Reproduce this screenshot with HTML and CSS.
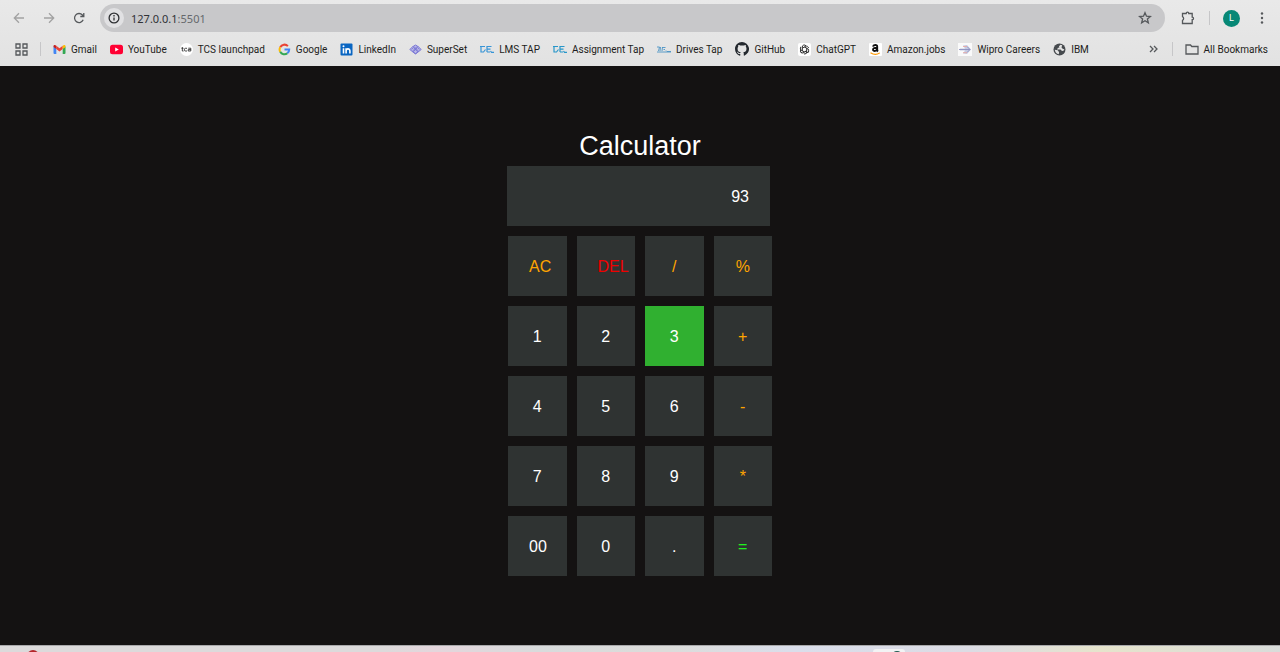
FILE: index.html
```html
<!DOCTYPE html>
<html lang="en">
<head>
<meta charset="utf-8">
<title>Calculator</title>
<link rel="stylesheet" href="styles.css">
</head>
<body>
<header class="browser">
  <div class="toolbar">
    <button class="nav muted" aria-label="Back"><svg width="14" height="14" viewBox="0 0 14 14" class="line"><path d="M12 7H2.5M7 2.3 2.3 7 7 11.7"/></svg></button>
    <button class="nav muted" aria-label="Forward"><svg width="14" height="14" viewBox="0 0 14 14" class="line"><path d="M2 7h9.500M7 2.300 11.700 7 7 11.700"/></svg></button>
    <button class="nav" aria-label="Reload"><svg width="14" height="14" viewBox="0 0 14 14" class="line"><path d="M11.200 8.800A4.500 4.500 0 1 1 10.400 4L11.600 5.300M11.800 2v3.500H8.300"/></svg></button>
    <div class="address">
      <button class="site-info" aria-label="Site information"><svg width="12" height="12" viewBox="0 0 12 12" class="line"><circle cx="6" cy="6" r="4.900"/><path d="M6 5.400v3.200M6 3.100v1.300"/></svg></button>
      <span class="url">127.0.0.1<span class="port">:5501</span></span>
      <button class="star" aria-label="Bookmark this tab"><svg width="14" height="14" viewBox="0 0 14 14" class="line"><path d="M7 1.700 8.500 5.200l3.900.3-3 2.500.95 3.800L7 9.800l-3.350 2L4.600 8l-3-2.500 3.900-.3z"/></svg></button>
    </div>
    <button class="extensions" aria-label="Extensions"><svg width="16" height="16" viewBox="0 0 16 16" class="line"><path d="M2.500 3.500h3.700a1.300 1.300 0 0 1 2.600 0h3.400v3.600a1.300 1.300 0 0 1 0 2.600v3.800H2.500v-3.200a2 2 0 0 0 0-3.600z"/></svg></button>
    <span class="divider"></span>
    <button class="avatar" aria-label="Profile">L</button>
    <button class="more" aria-label="Menu"><svg width="4" height="14" viewBox="0 0 4 14"><circle cx="2" cy="2.500" r="1.200"/><circle cx="2" cy="7" r="1.200"/><circle cx="2" cy="11.500" r="1.200"/></svg></button>
  </div>
  <nav class="bookmarks" aria-label="Bookmarks">
    <button class="apps" aria-label="Apps"><svg width="13" height="13" viewBox="0 0 13 13" class="line"><path d="M1 1h4v4H1zM8 1h4v4H8zM1 8h4v4H1zM8 8h4v4H8z"/></svg></button>
    <span class="divider"></span>
    <div class="links">
      <a href="#"><svg width="13" height="13" viewBox="0 0 13 13"><path fill="#4285f4" d="M.5 3.500 3.300 5.500V11H1.500a1 1 0 0 1-1-1z"/><path fill="#34a853" d="M12.500 3.500 9.700 5.500V11h1.800a1 1 0 0 0 1-1z"/><path fill="#ea4335" d="M3.300 2.800 6.500 5.200 9.700 2.800V6L6.500 8.400 3.300 6z"/><path fill="#c5221f" d="M.5 3.300C.5 2 2 1.600 3.300 2.800V6L.5 4z"/><path fill="#fbbc04" d="M12.500 3.300c0-1.300-1.500-1.700-2.800-.5V6l2.800-2z"/></svg>Gmail</a>
      <a href="#"><svg width="13" height="13" viewBox="0 0 13 13"><rect y="1.700" width="13" height="9.600" rx="2.500" fill="#ff0033"/><path fill="#fff" d="m5.200 4.400 3.600 2.100-3.600 2.100z"/></svg>YouTube</a>
      <a href="#"><svg width="13" height="13" viewBox="0 0 13 13"><circle cx="6.500" cy="6.500" r="6.500" fill="#fff"/><path class="thin" stroke="#333" d="M2.300 4v4h1.300M1.500 5.300h2M7 5.300H5.400q-1 0-1 1.400T5.500 8H7M8.300 5.200h2.500V8H8.200V6.600h2.600"/></svg>TCS launchpad</a>
      <a href="#"><svg width="13" height="13" viewBox="0 0 13 13" fill="none" stroke-width="2"><path stroke="#ea4335" d="M2.200 4.200A4.800 4.800 0 0 1 9.900 3.100"/><path stroke="#fbbc04" d="M2.200 4.200a4.800 4.800 0 0 0 0 4.600"/><path stroke="#34a853" d="M2.200 8.800a4.800 4.800 0 0 0 7.200 1.500"/><path stroke="#4285f4" d="M9.400 10.300a4.500 4.500 0 0 0 1.800-3.700H6.500"/></svg>Google</a>
      <a href="#"><svg width="13" height="13" viewBox="0 0 13 13"><rect x=".5" y=".5" width="12" height="12" rx="1" fill="#0a66c2"/><circle cx="3.500" cy="3.300" r="1" fill="#fff"/><path fill="none" stroke="#fff" stroke-width="1.600" d="M3.500 5.200v5.300M6.100 5.200v5.300M6.100 7.900c0-2.700 3.800-2.700 3.800 0v2.600"/></svg>LinkedIn</a>
      <a href="#"><svg width="13" height="13" viewBox="0 0 13 13"><path fill="#b9b8e6" d="M.8 6.500 4.300 3l2.200-1 2.200 1 3.500 3.500-3.400 3.300-2.300 1.200-2.300-1.200z"/><g class="thin" stroke="#7774d4"><path d="m.8 6.500 3.500-3.500 5 5-2.800 3zM12.200 6.500 8.700 3l-5 5 2.800 3z"/><path d="m2.400 6.500 2-2 4.200 4.200M10.600 6.500l-2-2-4.200 4.200M4.500 3l2-1 2 1"/></g></svg>SuperSet</a>
      <a href="#"><svg width="14" height="13" viewBox="0 0 14 13"><path fill="none" stroke="#3794d6" stroke-width="1.200" d="M0 3.500h5M1 3.500V9h2.500L5.500 6.500M7 3.500h4.500M7 3v6M7 6.200h3.500M7 9h3M10.500 8l1 1.300h2.500"/></svg>LMS TAP</a>
      <a href="#"><svg width="14" height="13" viewBox="0 0 14 13"><path fill="none" stroke="#2796c9" stroke-width="1.200" d="M0 3.500h5M1 3.500V9h2.500L5.500 6.500M7 3.500h4.500M7 3v6M7 6.200h3.500M7 9h3M10.500 8l1 1.300h2.500"/></svg>Assignment Tap</a>
      <a href="#"><svg width="14" height="13" viewBox="0 0 14 13"><path class="thin" stroke="#4b93c4" d="M0 4h2.500L1.500 8M3.500 4 3 8M5.500 4l-.5 4M5 4.500h3.500M6.500 6.500H8M0 9h14M9 7.500l1 1h4"/></svg>Drives Tap</a>
      <a href="#"><svg width="14" height="14" viewBox="0 0 16 16"><path fill="#24292f" d="M8 0C3.580 0 0 3.580 0 8c0 3.540 2.290 6.530 5.470 7.590.4.070.55-.17.55-.38v-1.490c-2.010.37-2.530-.49-2.690-.94-.09-.23-.48-.94-.82-1.130-.28-.15-.68-.52-.01-.53.63-.01 1.080.58 1.230.82.72 1.210 1.870.87 2.330.66.070-.52.280-.87.510-1.070-1.780-.2-3.640-.89-3.640-3.950 0-.87.310-1.590.82-2.150-.08-.2-.36-1.020.08-2.120 0 0 .67-.21 2.200.82a7.600 7.600 0 0 1 4 0c1.530-1.040 2.200-.82 2.200-.82.44 1.100.16 1.920.08 2.120.51.560.82 1.270.82 2.150 0 3.070-1.870 3.750-3.650 3.950.29.250.54.730.54 1.480v2.190c0 .21.150.46.550.38A8 8 0 0 0 8 0z"/></svg>GitHub</a>
      <a href="#"><svg width="13" height="13" viewBox="0 0 13 13"><rect width="13" height="13" rx="2" fill="#fff"/><g class="thin" stroke="#222"><path id="petal" d="M4.300 7.800V4a2 2 0 0 1 3.700-1.100M4.300 5.200l3.200-1.800a2 2 0 0 1 3 1.600"/><use href="#petal" transform="rotate(120 6.500 6.500)"/><use href="#petal" transform="rotate(240 6.500 6.500)"/></g></svg>ChatGPT</a>
      <a href="#"><svg width="13" height="13" viewBox="0 0 13 13"><rect width="13" height="13" rx="1" fill="#fff"/><path fill="none" stroke="#111" stroke-width="1.900" d="M4 3.700C4.300 1.500 8.200 1.300 8.200 3.500v3.300q0 1 .9 1.500M8.200 4.700C5.500 4.600 4 5.200 4 6.700 4 8.700 8.200 8.400 8.200 5.500"/><path fill="none" stroke="#f90" stroke-width="1.100" d="M1.500 9.700q4.800 3.200 9.300.2"/></svg>Amazon.jobs</a>
      <a href="#"><svg width="14" height="13" viewBox="0 0 14 13"><rect width="14" height="13" fill="#fafafa"/><path fill="#c5cbe2" d="M5 2.500 9 2l4 4.500-4 4.500-4-.5 2-3H2V5.500h5z"/><path class="thin" stroke="#8c8fc0" d="M1 6.500h11M9 3.500l3 3-3 3"/><path class="thin" stroke="#e8a9a6" d="M5 3.500h4M5 9.700h4"/></svg>Wipro Careers</a>
      <a href="#"><svg width="13" height="13" viewBox="0 0 13 13"><circle cx="6.500" cy="6.500" r="6" fill="#464a4e"/><path fill="#e2e2e2" d="M7.500 1.700 6 3.300l.3 1.500H5L4 6.500h3.500L9 8l1.500-.2.9-1.500L10 6 8.500 4.500 9.200 2.300zM1.800 6.800l3 .5 1.300 1.900-.3 2.100C3.500 11 1.900 9 1.800 6.800z"/></svg>IBM</a>
    </div>
    <button class="overflow" aria-label="More bookmarks"><svg width="9" height="8" viewBox="0 0 9 8" class="line"><path d="m1 1 3 3-3 3M5 1l3 3-3 3"/></svg></button>
    <span class="divider"></span>
    <a class="all" href="#"><svg width="14" height="13" viewBox="0 0 14 13" class="line"><path d="M1 2h4.500l1.300 1.500H13V11H1z"/></svg>All Bookmarks</a>
  </nav>
</header>
<main class="page">
  <section class="calculator">
    <h1 class="title">Calculator</h1>
    <input class="display" type="text" value="93" aria-label="Result" readonly>
    <div class="keys">
      <button class="key op">AC</button>
      <button class="key delete">DEL</button>
      <button class="key op">/</button>
      <button class="key op">%</button>
      <button class="key">1</button>
      <button class="key">2</button>
      <button class="key active">3</button>
      <button class="key op">+</button>
      <button class="key">4</button>
      <button class="key">5</button>
      <button class="key">6</button>
      <button class="key op">-</button>
      <button class="key">7</button>
      <button class="key">8</button>
      <button class="key">9</button>
      <button class="key op">*</button>
      <button class="key">00</button>
      <button class="key">0</button>
      <button class="key">.</button>
      <button class="key equals">=</button>
    </div>
  </section>
</main>
<footer class="taskbar">
  <svg class="badge" width="12" height="6" viewBox="0 0 12 6"><circle cx="6" cy="6" r="6" fill="#b3262b"/></svg>
  <span class="task"><svg width="8" height="3" viewBox="0 0 8 3"><path fill="#1f5a50" d="M0 3q1-2 4-2t4 2z"/></svg></span>
</footer>
</body>
</html>
```
FILE: styles.css
```css
* {
  box-sizing: border-box;
}

body {
  margin: 0;
  min-height: 100vh;
  display: flex;
  flex-direction: column;
  background: #141212;
  font-family: "Liberation Sans", Arial, sans-serif;
}

button {
  padding: 0;
  border: 0;
  background: none;
  font: inherit;
  color: inherit;
}

svg {
  display: block;
  flex: none;
}

.line {
  fill: none;
  stroke: currentColor;
  stroke-width: 1.3;
}

.thin {
  fill: none;
  stroke-width: 0.9;
}

.browser {
  background: linear-gradient(#e9e9e9, #e2e2e2);
  color: #55585b;
  font-family: Roboto, sans-serif;
  font-size: 10px;
}

.toolbar {
  display: flex;
  align-items: center;
  height: 36px;
  padding: 0 16px 0 12px;
}

.nav {
  width: 14px;
  margin-right: 16px;
}

.nav.muted {
  color: #a2a2a2;
}

.address {
  flex: 1;
  display: flex;
  align-items: center;
  gap: 7px;
  height: 28px;
  margin-left: -2px;
  padding: 0 13px 0 4px;
  border-radius: 14px;
  background: #c8c8ca;
}

.site-info {
  display: grid;
  place-items: center;
  width: 20px;
  height: 20px;
  border-radius: 50%;
  background: #e1e1e3;
  color: #2e3033;
}

.url {
  flex: 1;
  font-family: "Noto Sans", sans-serif;
  font-size: 11px;
  color: #303236;
}

.port {
  color: #66686c;
}

.extensions {
  margin-left: 15px;
}

.divider {
  width: 1px;
  height: 14px;
  background: #c6c6c8;
}

.toolbar .divider {
  margin: 0 13px 0 13px;
}

.avatar {
  width: 17px;
  height: 17px;
  border-radius: 50%;
  background: #078876;
  color: #fff;
  font-size: 9px;
}

.more {
  margin-left: 20px;
  fill: currentColor;
}

.bookmarks {
  display: flex;
  align-items: center;
  height: 30px;
  padding: 0 12px 4px 15px;
}

.bookmarks a {
  display: flex;
  align-items: center;
  gap: 5px;
  color: #1d1d20;
  text-decoration: none;
  white-space: nowrap;
}

.bookmarks .divider {
  margin: 0 12px;
}

.links {
  flex: 1;
  display: flex;
  gap: 13px;
}

.bookmarks .all svg {
  color: #55585b;
}

.overflow {
  margin-right: 2px;
}

.page {
  flex: 1;
  display: flex;
  justify-content: center;
  padding: 64px 0;
}

.calculator {
  display: flex;
  flex-direction: column;
  width: 266px;
}

.title {
  margin: 0 0 4px;
  color: #fff;
  font-size: 27px;
  font-weight: 400;
  line-height: 32px;
  text-align: center;
}

.display {
  height: 60px;
  margin: 0 3px 10px 0;
  padding: 2px 21px 0;
  border: 0;
  background: #2f3332;
  color: #fff;
  font: inherit;
  font-size: 16px;
  text-align: right;
}

.keys {
  display: grid;
  grid-template-columns: repeat(4, minmax(0, 1fr));
  grid-auto-rows: 60px;
  gap: 10px;
  padding: 0 1px;
}

.key {
  padding: 2px 21px 0;
  background: #2f3332;
  color: #fff;
  font-size: 16px;
}

.op {
  color: #ffa500;
}

.delete {
  color: #f00000;
}

.active {
  background: #30b030;
}

.equals {
  color: #20f020;
}

.taskbar {
  display: flex;
  height: 7px;
  overflow: hidden;
  border-top: 1px solid #a9a9ab;
  background: linear-gradient(90deg, #dcdadb 0 30%, #e4d6dc 34%, #d8dbdc 42%, #dcdcda 52%, #dadeeb 62%, #dcdce4 76%, #e6e4cc 86%, #d9dcda);
}

.badge {
  margin: 4px 0 0 27px;
}

.task {
  display: flex;
  justify-content: flex-end;
  width: 32px;
  height: 6px;
  margin: 3px 0 0 834px;
  padding: 1px 4px 0;
  border-radius: 3px 3px 0 0;
  background: #f2f3f4;
}
```
